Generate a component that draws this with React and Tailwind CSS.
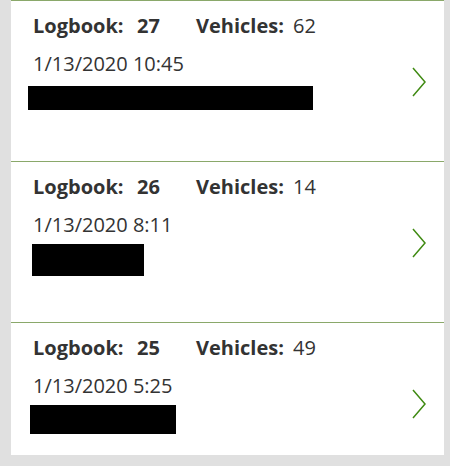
import React from "react";

const rows = [
  { id: 27, veh: 62, date: "1/13/2020 10:45", bar: "ml-[-5px] w-[285px] h-[24px] mt-[8px]" },
  { id: 26, veh: 14, date: "1/13/2020 8:11", bar: "ml-[-1px] w-[112px] h-[32px] mt-[5px]" },
  { id: 25, veh: 49, date: "1/13/2020 5:25", bar: "ml-[-3px] w-[146px] h-[29px] mt-[5px]" },
];

function Chevron() {
  return (
    <svg width="16" height="30" viewBox="0 0 16 30" className="shrink-0">
      <path d="M2 1 L14 15 L2 29" fill="none" stroke="#3f8a12" strokeWidth="1.5" />
    </svg>
  );
}

export default function App() {
  return (
    <div className="w-[450px] h-[466px] bg-[#e0e0e0] pl-[11px] pr-[6px]" style={{ fontFamily: '"Open Sans", "Noto Sans", sans-serif' }}>
      <div className="bg-white h-[455px] flex flex-col overflow-hidden">
        {rows.map((r) => (
          <div key={r.id} className="shrink-0 border-t border-[#8aa86a] h-[161px] flex items-start pl-[22px] pr-[17px] text-[#333333]">
            <div className="flex-1 flex flex-col pt-[11px]">
              <div className="flex items-baseline text-[20px] leading-[28px]">
                <span className="font-bold w-[104px]">Logbook:</span>
                <span className="font-bold w-[59px]">{r.id}</span>
                <span className="font-bold w-[97px]">Vehicles:</span>
                <span>{r.veh}</span>
              </div>
              <div className="text-[20px] leading-[28px] mt-[10px]">{r.date}</div>
              <div className={"bg-black " + r.bar}></div>
            </div>
            <div className="mt-[66px]">
              <Chevron />
            </div>
          </div>
        ))}
      </div>
    </div>
  );
}
